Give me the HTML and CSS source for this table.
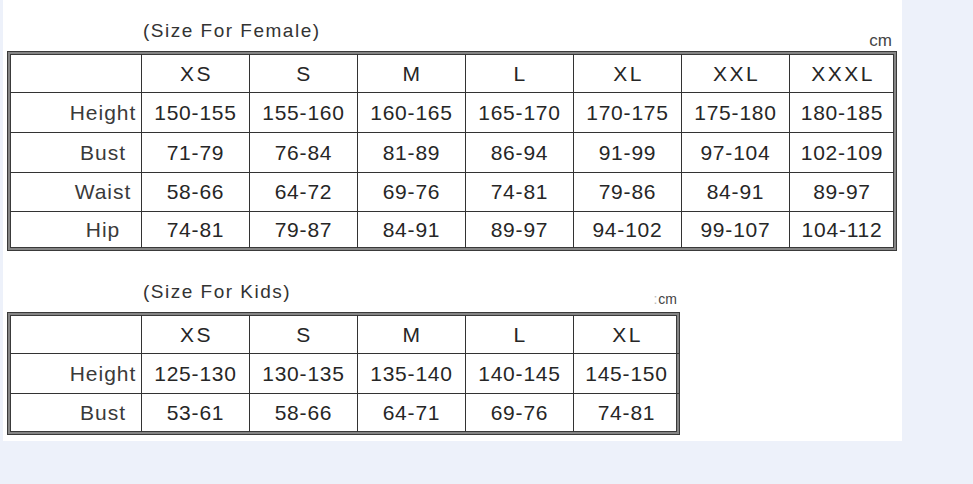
FILE: index.html
```html
<!DOCTYPE html>
<html lang="en">
<head>
<meta charset="utf-8">
<title>Size Chart</title>
<link rel="stylesheet" href="styles.css">
</head>
<body>
<div class="sheet">
  <section class="block female">
    <div class="caption">
      <span class="title">(Size For Female)</span>
      <span class="unit">cm</span>
    </div>
    <div class="chart chart-7">
      <div class="cell head"></div>
      <div class="cell head">XS</div>
      <div class="cell head">S</div>
      <div class="cell head">M</div>
      <div class="cell head">L</div>
      <div class="cell head">XL</div>
      <div class="cell head">XXL</div>
      <div class="cell head last">XXXL</div>

      <div class="cell label">Height</div>
      <div class="cell">150-155</div>
      <div class="cell">155-160</div>
      <div class="cell">160-165</div>
      <div class="cell">165-170</div>
      <div class="cell">170-175</div>
      <div class="cell">175-180</div>
      <div class="cell last">180-185</div>

      <div class="cell label">Bust</div>
      <div class="cell">71-79</div>
      <div class="cell">76-84</div>
      <div class="cell">81-89</div>
      <div class="cell">86-94</div>
      <div class="cell">91-99</div>
      <div class="cell">97-104</div>
      <div class="cell last">102-109</div>

      <div class="cell label">Waist</div>
      <div class="cell">58-66</div>
      <div class="cell">64-72</div>
      <div class="cell">69-76</div>
      <div class="cell">74-81</div>
      <div class="cell">79-86</div>
      <div class="cell">84-91</div>
      <div class="cell last">89-97</div>

      <div class="cell label bottom">Hip</div>
      <div class="cell bottom">74-81</div>
      <div class="cell bottom">79-87</div>
      <div class="cell bottom">84-91</div>
      <div class="cell bottom">89-97</div>
      <div class="cell bottom">94-102</div>
      <div class="cell bottom">99-107</div>
      <div class="cell bottom last">104-112</div>
    </div>
  </section>

  <section class="block kids">
    <div class="caption">
      <span class="title">(Size For Kids)</span>
      <span class="unit small"><span class="dot">:</span>cm</span>
    </div>
    <div class="chart chart-5">
      <div class="cell head"></div>
      <div class="cell head">XS</div>
      <div class="cell head">S</div>
      <div class="cell head">M</div>
      <div class="cell head">L</div>
      <div class="cell head last">XL</div>

      <div class="cell label">Height</div>
      <div class="cell">125-130</div>
      <div class="cell">130-135</div>
      <div class="cell">135-140</div>
      <div class="cell">140-145</div>
      <div class="cell last">145-150</div>

      <div class="cell label bottom">Bust</div>
      <div class="cell bottom">53-61</div>
      <div class="cell bottom">58-66</div>
      <div class="cell bottom">64-71</div>
      <div class="cell bottom">69-76</div>
      <div class="cell bottom last">74-81</div>
    </div>
  </section>
</div>
</body>
</html>
```

FILE: styles.css
```css
html, body {
  margin: 0;
  padding: 0;
}

body {
  background: #edf1fa;
  font-family: "Liberation Sans", Arial, sans-serif;
  color: #2a2a2a;
}

.sheet {
  width: 899px;
  height: 441px;
  background: #ffffff;
  margin-left: 3px;
  padding-left: 4px;
  box-sizing: border-box;
  display: flex;
  flex-direction: column;
  gap: 10px;
}

.block {
  display: flex;
  flex-direction: column;
}

.female {
  width: 890px;
}

.kids {
  width: 673px;
}

.caption {
  height: 51px;
  display: flex;
  align-items: flex-end;
  justify-content: space-between;
  box-sizing: border-box;
}

.title {
  font-size: 19px;
  line-height: 22px;
  letter-spacing: 1.5px;
  color: #333;
  margin-left: 136px;
  margin-bottom: 9px;
}

.unit {
  font-size: 17px;
  line-height: 18px;
  color: #444;
  margin-right: 5px;
  margin-bottom: 1px;
}

.unit.small {
  font-size: 14px;
  line-height: 16px;
  margin-right: 3px;
  margin-bottom: 5px;
}

.dot {
  color: #bbb;
  margin-right: 1px;
}

.chart {
  display: grid;
  border: 3px solid #858585;
  outline: 1px solid #3a3a3a;
  outline-offset: -1px;
  box-shadow: inset 0 0 0 1px #3a3a3a;
}

.chart-7 {
  grid-template-columns: 132px repeat(6, 108px) 104px;
  grid-template-rows: 39px 40px 40px 39px 36px;
}

.chart-5 {
  grid-template-columns: 132px repeat(4, 108px) 105px;
  grid-template-rows: 39px 40px 38px;
}

.cell {
  display: flex;
  align-items: center;
  justify-content: center;
  border-right: 1px solid #333;
  border-bottom: 1px solid #333;
  font-size: 21px;
  letter-spacing: 0.8px;
  color: #262626;
  white-space: nowrap;
}

.cell.head {
  letter-spacing: 2.5px;
  padding-left: 2px;
  padding-top: 1px;
}

.cell.label {
  padding-left: 55px;
  letter-spacing: 1px;
  color: #3a3a3a;
}

.cell.last {
  border-right: none;
}

.cell.bottom {
  border-bottom: none;
}
```
